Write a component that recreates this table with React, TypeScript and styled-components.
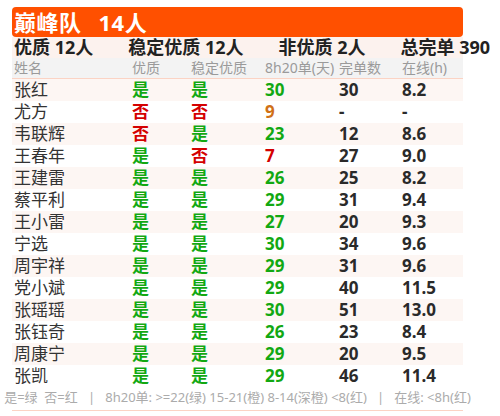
import styled, { createGlobalStyle } from "styled-components";

type Tone = "green" | "red" | "orange" | "dark";

type Member = {
  name: string;
  good: boolean;
  stable: boolean;
  orders: number;
  total: string;
  online: string;
};

const members: Member[] = [
  { name: "张红", good: true, stable: true, orders: 30, total: "30", online: "8.2" },
  { name: "尤方", good: false, stable: false, orders: 9, total: "-", online: "-" },
  { name: "韦联辉", good: false, stable: true, orders: 23, total: "12", online: "8.6" },
  { name: "王春年", good: true, stable: false, orders: 7, total: "27", online: "9.0" },
  { name: "王建雷", good: true, stable: true, orders: 26, total: "25", online: "8.2" },
  { name: "蔡平利", good: true, stable: true, orders: 29, total: "31", online: "9.4" },
  { name: "王小雷", good: true, stable: true, orders: 27, total: "20", online: "9.3" },
  { name: "宁选", good: true, stable: true, orders: 30, total: "34", online: "9.6" },
  { name: "周宇祥", good: true, stable: true, orders: 29, total: "31", online: "9.6" },
  { name: "党小斌", good: true, stable: true, orders: 29, total: "40", online: "11.5" },
  { name: "张瑶瑶", good: true, stable: true, orders: 30, total: "51", online: "13.0" },
  { name: "张钰奇", good: true, stable: true, orders: 26, total: "23", online: "8.4" },
  { name: "周康宁", good: true, stable: true, orders: 29, total: "20", online: "9.5" },
  { name: "张凯", good: true, stable: true, orders: 29, total: "46", online: "11.4" },
];

const toneColors: Record<Tone, string> = {
  green: "#12a812",
  red: "#d40000",
  orange: "#d07016",
  dark: "#2a2a2a",
};

function orderTone(n: number): Tone {
  if (n >= 22) return "green";
  if (n >= 8) return "orange";
  return "red";
}

const GlobalStyle = createGlobalStyle`
  body {
    margin: 0;
    background: #ffffff;
    font-family: "Noto Sans", "Noto Sans CJK SC", sans-serif;
  }
`;

export default function App() {
  return (
    <>
      <GlobalStyle />
      <Board>
        <Banner>
          巅峰队<BannerCount>14人</BannerCount>
        </Banner>
        <Summary>
          <span>优质 12人</span>
          <span>稳定优质 12人</span>
          <span>非优质 2人</span>
          <span>总完单 390</span>
        </Summary>
        <HeadRow>
          <span>姓名</span>
          <span>优质</span>
          <span>稳定优质</span>
          <span>8h20单(天)</span>
          <span>完单数</span>
          <span>在线(h)</span>
        </HeadRow>
        {members.map((m, i) => (
          <Row key={m.name} $striped={i % 2 === 0}>
            <Name>{m.name}</Name>
            <Value $tone={m.good ? "green" : "red"}>{m.good ? "是" : "否"}</Value>
            <Value $tone={m.stable ? "green" : "red"}>{m.stable ? "是" : "否"}</Value>
            <Value $tone={orderTone(m.orders)}>{m.orders}</Value>
            <Value $tone="dark">{m.total}</Value>
            <Value $tone="dark">{m.online}</Value>
          </Row>
        ))}
        <Legend>
          <span>
            是=绿&nbsp;&nbsp;否=红&nbsp;&nbsp;&nbsp;|&nbsp;&nbsp;&nbsp;8h20单: &gt;=22(绿) 15-21(橙) 8-14(深橙) &lt;8(红)&nbsp;&nbsp;&nbsp;|&nbsp;&nbsp;&nbsp;在线: &lt;8h(红)
          </span>
        </Legend>
      </Board>
    </>
  );
}

const Board = styled.div`
  width: 451px;
  margin: 7px 0 0 12px;
`;

const Banner = styled.div`
  height: 30px;
  background: #ff5000;
  border-radius: 4px;
  color: #ffffff;
  font-size: 22px;
  font-weight: 700;
  letter-spacing: 0.5px;
  line-height: 30px;
  padding-left: 2px;
  white-space: nowrap;
  overflow: hidden;
`;

const BannerCount = styled.span`
  margin-left: 17px;
`;

const Summary = styled.div`
  display: flex;
  gap: 35px;
  height: 21px;
  padding-left: 2px;
  background: #fcf2ee;
  color: #222222;
  font-size: 18px;
  font-weight: 700;
  line-height: 21px;
  white-space: nowrap;
`;

const grid = `
  display: grid;
  grid-template-columns: 118px 59px 74px 74px 63px 63px;
  padding-left: 2px;
  white-space: nowrap;
`;

const HeadRow = styled.div`
  ${grid}
  height: 20px;
  background: #f3f3f3;
  border-bottom: 1px solid #fbd3c4;
  color: #9a9a9a;
  font-size: 14px;
  line-height: 20px;
`;

const Row = styled.div<{ $striped: boolean }>`
  ${grid}
  height: 22px;
  line-height: 22px;
  background: ${(p) => (p.$striped ? "#fdf6f3" : "#ffffff")};
`;

const Name = styled.span`
  color: #333333;
  font-size: 17px;
`;

const Value = styled.span<{ $tone: Tone }>`
  color: ${(p) => toneColors[p.$tone]};
  font-size: 17px;
  font-weight: 700;
`;

const Legend = styled.div`
  display: flex;
  justify-content: center;
  height: 20px;
  padding-bottom: 3px;
  border-bottom: 1px solid #fbd3c4;
  color: #ababab;
  font-size: 13px;
  line-height: 20px;
  white-space: nowrap;
`;
